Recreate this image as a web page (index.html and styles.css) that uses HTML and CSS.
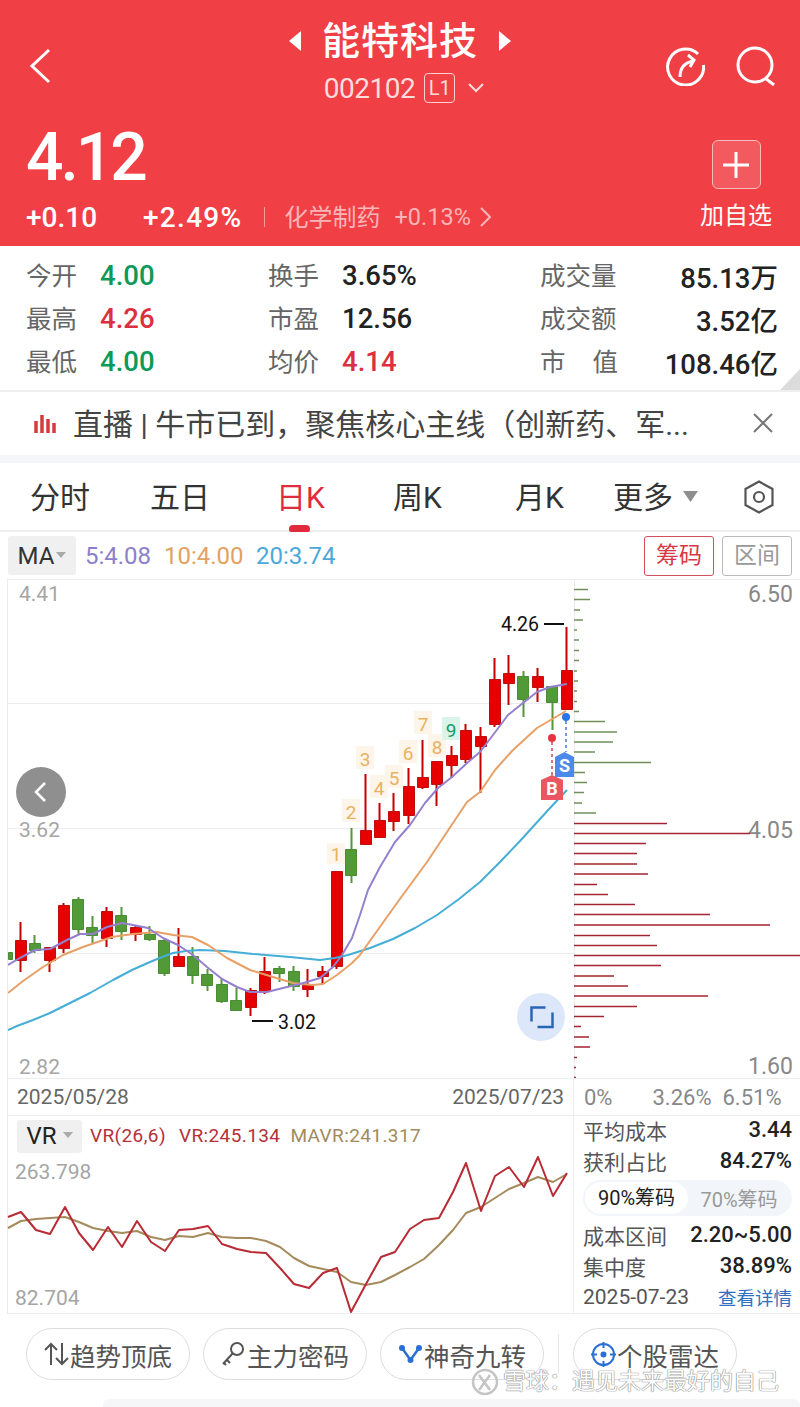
FILE: index.html
```
<!DOCTYPE html>
<html lang="zh">
<head>
<meta charset="utf-8">
<title>能特科技</title>
<link rel="stylesheet" href="styles.css">
</head>
<body>
<div class="page">
  <header class="hdr">
    <div class="hdr-top">
      <svg class="ic-back" viewBox="0 0 24 40" width="24" height="40"><polyline points="21,4 4,20 21,36"/></svg>
      <div class="hdr-mid">
        <div class="title-row">
          <svg class="tri" width="14" height="22" viewBox="0 0 14 22"><polygon points="13,1 13,21 1,11"/></svg>
          <span class="title">能特科技</span>
          <svg class="tri" width="14" height="22" viewBox="0 0 14 22"><polygon points="1,1 1,21 13,11"/></svg>
        </div>
        <div class="code-row">
          <span class="code">002102</span>
          <span class="l1">L1</span>
          <svg class="chev" width="16" height="10" viewBox="0 0 16 10"><polyline points="1,1 8,8 15,1"/></svg>
        </div>
      </div>
      <div class="hdr-icons">
        <svg class="ic-hdr" width="40" height="40" viewBox="0 0 40 40"><path d="M33 8A18 18 0 1 0 38.500 19"/><path d="M15 31C15 24 18 17 28 15"/><polyline points="23,9 29,14 25,21"/></svg>
        <svg class="ic-hdr" width="40" height="40" viewBox="0 0 40 40"><circle cx="19" cy="19" r="17"/><line x1="29" y1="32" x2="38" y2="39"/></svg>
      </div>
    </div>
    <div class="hdr-bot">
      <div class="quote">
        <div class="price">4.12</div>
        <div class="chg-row">
          <span class="chg c1">+0.10</span>
          <span class="chg c2">+2.49%</span>
          <span class="vsep"></span>
          <span class="sector">化学制药</span>
          <span class="sector-chg">+0.13%</span>
          <svg class="sector-arrow" width="11" height="20" viewBox="0 0 11 20"><polyline points="1,1 10,10 1,19"/></svg>
        </div>
      </div>
      <div class="add">
        <div class="add-box"><svg width="28" height="28" viewBox="0 0 28 28"><path d="M14 1V27M1 14H27"/></svg></div>
        <div class="add-txt">加自选</div>
      </div>
    </div>
  </header>

  <section class="stats">
    <div class="stat"><span class="k">今开</span><span class="v green">4.00</span></div>
    <div class="stat"><span class="k">换手</span><span class="v">3.65%</span></div>
    <div class="stat wide"><span class="k">成交量</span><span class="v">85.13万</span></div>
    <div class="stat"><span class="k">最高</span><span class="v red">4.26</span></div>
    <div class="stat"><span class="k">市盈</span><span class="v">12.56</span></div>
    <div class="stat wide"><span class="k">成交额</span><span class="v">3.52亿</span></div>
    <div class="stat"><span class="k">最低</span><span class="v green">4.00</span></div>
    <div class="stat"><span class="k">均价</span><span class="v red">4.14</span></div>
    <div class="stat wide"><span class="k kj"><span>市</span><span>值</span></span><span class="v">108.46亿</span></div>
    <span class="corner"></span>
  </section>

  <section class="news">
    <svg class="news-ic" width="24" height="20" viewBox="0 0 24 20"><path d="M3 7V19M9 1V19M15 5V19M21 9V19"/></svg>
    <span class="news-txt">直播 | 牛市已到，聚焦核心主线（创新药、军...</span>
    <svg class="news-x" width="20" height="20" viewBox="0 0 20 20"><path d="M1 1L19 19M19 1L1 19"/></svg>
  </section>

  <nav class="tabs">
    <span class="tab t1">分时</span>
    <span class="tab t2">五日</span>
    <span class="tab t3 on">日K</span>
    <span class="tab t4">周K</span>
    <span class="tab t5">月K</span>
    <span class="tab t6">更多<svg width="15" height="12" viewBox="0 0 15 12"><polygon points="0,1 15,1 7.500,12"/></svg></span>
    <svg class="hex" width="30" height="34" viewBox="0 0 30 34"><polygon points="15,1.500 28.500,9 28.500,25 15,32.500 1.500,25 1.500,9"/><circle cx="15" cy="17" r="5"/></svg>
  </nav>

  <section class="ma-row">
    <span class="pick">MA<i class="caret"></i></span>
    <span class="ma m5">5:4.08</span>
    <span class="ma m10">10:4.00</span>
    <span class="ma m20">20:3.74</span>
    <span class="btn b-on">筹码</span>
    <span class="btn">区间</span>
  </section>

  <section class="panel">
    <svg class="main" viewBox="8 580 792 498" width="792" height="498">
      <path class="grid" d="M8 703.500H574M8 828.500H574M8 953.500H574M574.500 580V1078"/>
      <g class="ax">
        <text class="al" x="19" y="601">4.41</text>
        <text class="al" x="19" y="837">3.62</text>
        <text class="al" x="19" y="1074">2.82</text>
        <text class="ar" x="748" y="602">6.50</text>
        <text class="ar" x="748" y="838">4.05</text>
        <text class="ar" x="748" y="1074">1.60</text>
      </g>
      <path class="chip-g" d="M574 589.500H588M574 599.500H590M574 610H580M574 620H583M574 630H577M574 640H579M574 650.500H579M574 660.500H579M574 671H577M574 681H578M574 691H577M574 701.500H577M574 711.500H579M574 721.500H605M574 732H617M574 742H613M574 752H595M574 762.500H651M574 772.500H585M574 782.500H587M574 792.500H584M574 803H582M574 813H596"/>
      <path class="chip-r" d="M574 823.500H667M574 833.500H750M574 843.500H646M574 853.500H637M574 864H637M574 874H648M574 884.500H597M574 894.500H608M574 904.500H635M574 914.500H710M574 925H770M574 935.500H650M574 945.500H657M574 955.500H800M574 965.500H661M574 976H614M574 986H628M574 996H708M574 1006.500H637M574 1016.500H604M574 1026.500H581M574 1037H589M574 1047H590M574 1057.500H577M574 1067.500H576M574 1077.500H576"/>

      <path class="wick-r" d="M20.500 922V972M49.500 947V972M63.500 903V953M106.500 907V947M135.500 925V941M178.500 928V967M250.500 988V1016M264.500 957V994M307.500 969V997M322.500 966V984M336.500 871V969M365.500 774V844M379.500 803V837M393.500 793V831M408.500 768V824M422.500 740V789M436.500 761V806M451.500 746V778M465.500 724V763M480.500 727V793M494.500 658V727M508.500 655V705M537.500 668V702M566.500 627V709"/>
      <path class="wick-g" d="M34.500 935V953M78.500 897V935M92.500 916V943M121.500 907V940M149.500 926V941M164.500 938V976M192.500 947V984M207.500 969V991M221.500 978V1003M236.500 988V1011M279.500 966V982M293.500 966V991M351.500 828V883M523.500 671V717M552.500 686V730"/>
      <path class="body-g" d="M8.500 952.500h4v7h-4zM29.500 943.500h11v7h-11zM72.500 899.500h11v30h-11zM86.500 927.500h11v8h-11zM115.500 915.500h11v16h-11zM144.500 934.500h11v5h-11zM158.500 940.500h11v33h-11zM187.500 956.500h11v19h-11zM201.500 974.500h11v11h-11zM216.500 984.500h11v17h-11zM230.500 1000.500h11v10h-11zM273.500 968.500h11v5h-11zM288.500 971.500h11v15h-11zM345.500 849.500h11v26h-11zM517.500 676.500h11v23h-11zM546.500 686.500h11v16h-11z"/>
      <path class="body-r" d="M15.500 940.500h11v20h-11zM44.500 947.500h11v13h-11zM58.500 905.500h11v43h-11zM101.500 911.500h11v27h-11zM130.500 927.500h11v7h-11zM173.500 956.500h11v10h-11zM245.500 990.500h11v17h-11zM259.500 971.500h11v20h-11zM302.500 985.500h11v4h-11zM317.500 971.500h11v5h-11zM331.500 871.500h11v95h-11zM360.500 830.500h11v14h-11zM374.500 820.500h11v17h-11zM388.500 811.500h11v10h-11zM403.500 786.500h11v29h-11zM417.500 777.500h11v10h-11zM431.500 761.500h11v23h-11zM446.500 755.500h11v10h-11zM460.500 730.500h11v29h-11zM475.500 736.500h11v10h-11zM489.500 679.500h11v45h-11zM503.500 673.500h11v10h-11zM532.500 676.500h11v11h-11zM561.500 670.500h11v39h-11z"/>

      <polyline class="ln l20" points="8,1030 17,1026 33,1020 50,1013 70,1003 90,993 113,980 132,970 150,962 162,957 173,953 186,951 200,950 225,951 253,954 290,957 320,960 335,958 348,955 370,948 393,939 415,928 437,915 459,899 480,882 500,862 520,841 530,830 550,808 567,790"/>
      <polyline class="ln l10" points="8,993 23,981 43,967 63,955 83,947 112,937 133,934 157,932 173,935 192,937 208,945 227,958 250,970 273,977 293,983 312,985 323,984 337,975 352,963 360,955 372,938 397,903 427,862 443,838 467,802 480,792 495,770 513,750 537,728 566,711"/>
      <polyline class="ln l5" points="8,965 20,958 35,950 50,949 67,940 80,934 93,934 107,927 122,923 133,925 148,928 163,938 178,945 193,955 207,967 222,979 237,987 250,992 267,992 287,987 300,984 320,978 333,967 342,955 352,938 360,915 368,890 380,867 395,842 410,825 425,803 438,788 452,777 467,763 480,752 493,735 508,715 523,703 537,692 550,687 567,684"/>

      <g class="tags">
        <rect class="tag" x="327" y="843" width="18" height="21"/><text class="tn" x="336" y="861">1</text>
        <rect class="tag" x="342" y="799" width="18" height="23"/><text class="tn" x="351" y="819">2</text>
        <rect class="tag" x="356" y="746" width="18" height="23"/><text class="tn" x="365" y="766">3</text>
        <rect class="tag" x="370" y="775" width="18" height="23"/><text class="tn" x="379" y="795">4</text>
        <rect class="tag" x="385" y="765" width="18" height="23"/><text class="tn" x="394" y="785">5</text>
        <rect class="tag" x="399" y="740" width="18" height="23"/><text class="tn" x="408" y="760">6</text>
        <rect class="tag" x="414" y="711" width="18" height="23"/><text class="tn" x="423" y="731">7</text>
        <rect class="tag" x="428" y="734" width="18" height="23"/><text class="tn" x="437" y="754">8</text>
        <rect class="tag9" x="442" y="717" width="18" height="23"/><text class="tn9" x="451" y="737">9</text>
      </g>

      <path class="hl" d="M544 624H564M252 1021H273"/>
      <text class="hlt" x="501" y="631">4.26</text>
      <text class="hlt" x="278" y="1029">3.02</text>

      <line class="dash-r" x1="552" y1="742" x2="552" y2="775"/>
      <line class="dash-b" x1="566" y1="721" x2="566" y2="752"/>
      <circle class="dot-r" cx="552" cy="738" r="4"/>
      <circle class="dot-b" cx="566" cy="717" r="4"/>
      <polygon class="bdg-b" points="552,775 563,780 563,800 541,800 541,780"/>
      <text class="bdg-t" x="552" y="795">B</text>
      <polygon class="bdg-s" points="564.500,752 574,757 574,777 555,777 555,757"/>
      <text class="bdg-t" x="564.500" y="772">S</text>

      <circle class="back" cx="41" cy="792" r="25"/>
      <polyline class="back-c" points="45,783 36,792 45,801"/>

      <circle class="expand" cx="541" cy="1017" r="24"/>
      <path class="expand-i" d="M531.500 1021.500V1007.500H545.500M552.500 1012.500V1027H537.500"/>
    </svg>

    <div class="axis">
      <div class="axis-l"><span>2025/05/28</span><span>2025/07/23</span></div>
      <div class="axis-r"><span>0%</span><span class="ar1">3.26%</span><span>6.51%</span></div>
    </div>

    <div class="sub">
      <div class="sub-l">
        <div class="vr-head">
          <span class="pick pick-vr">VR<i class="caret"></i></span>
          <span class="vr a">VR(26,6)</span>
          <span class="vr a">VR:245.134</span>
          <span class="vr b">MAVR:241.317</span>
        </div>
        <svg class="vr-chart" viewBox="8 1154 566 158" width="566" height="158">
          <text class="al" x="15" y="1179">263.798</text>
          <text class="al" x="15" y="1305">82.704</text>
          <polyline class="ln mavr" points="8,1228 21,1221 36,1219 50,1218 65,1217 79,1222 93,1228 108,1231 122,1233 137,1231 151,1237 165,1240 179,1236 193,1237 208,1233 222,1237 237,1238 251,1238 266,1241 280,1247 294,1258 309,1266 323,1269 337,1272 351,1282 366,1285 381,1282 395,1275 410,1267 424,1259 439,1245 453,1230 466,1213 481,1207 495,1198 509,1189 524,1183 538,1177 553,1182 567,1174"/>
          <polyline class="ln vrl" points="8,1217 21,1212 36,1230 50,1234 65,1207 79,1233 93,1250 108,1227 122,1247 137,1221 151,1242 165,1251 179,1230 193,1229 208,1226 222,1244 237,1249 251,1252 266,1253 280,1268 294,1284 309,1288 323,1273 337,1268 351,1312 366,1284 381,1257 395,1252 410,1229 424,1220 439,1218 453,1192 466,1163 481,1211 495,1176 509,1167 524,1187 538,1157 553,1196 567,1173"/>
        </svg>
      </div>
      <div class="sub-r">
        <div class="row"><span class="rk">平均成本</span><span class="rv">3.44</span></div>
        <div class="row"><span class="rk">获利占比</span><span class="rv">84.27%</span></div>
        <div class="seg"><span class="seg-on">90%筹码</span><span class="seg-off">70%筹码</span></div>
        <div class="row"><span class="rk">成本区间</span><span class="rv">2.20~5.00</span></div>
        <div class="row"><span class="rk">集中度</span><span class="rv">38.89%</span></div>
        <div class="row"><span class="rk">2025-07-23</span><span class="link">查看详情</span></div>
      </div>
    </div>
  </section>

  <footer class="tools">
    <span class="pill"><svg width="25" height="24" viewBox="0 0 25 24"><path d="M7 23V2M1 8L7 2L13 8M18 1V22M12 16L18 22L24 16"/></svg>趋势顶底</span>
    <span class="pill"><svg width="25" height="26" viewBox="0 0 25 26"><circle cx="16" cy="8" r="6"/><path d="M12 12L2 23M6 19L9 22M3 22L5 24"/></svg>主力密码</span>
    <span class="pill"><svg class="ic-v" width="25" height="20" viewBox="0 0 25 20"><path d="M4 4L12.500 16L21 4"/><circle cx="4" cy="4" r="3"/><circle cx="21" cy="4" r="3"/><circle cx="12.500" cy="16" r="3"/></svg>神奇九转</span>
    <span class="tool-sep"></span>
    <span class="pill"><svg class="ic-r" width="25" height="25" viewBox="0 0 25 25"><circle cx="12.500" cy="12.500" r="10.500"/><path d="M12.500 0V6M12.500 19V25M0 12.500H6M19 12.500H25"/><circle class="ic-rd" cx="12.500" cy="12.500" r="2"/></svg>个股雷达</span>
  </footer>
  <div class="home-bar"></div>

  <div class="wm">
    <svg width="30" height="30" viewBox="0 0 30 30"><circle cx="15" cy="15" r="12"/><path d="M9 8L20 23M20 8L9 23"/></svg>
    <span>雪球：遇见未来最好的自己</span>
  </div>
</div>
</body>
</html>
```

FILE: styles.css
```
* { box-sizing: border-box; }
html, body { margin: 0; padding: 0; background: #fff; }
body { font-family: Roboto, "Noto Sans CJK SC", sans-serif; }
.page { position: relative; width: 800px; height: 1407px; overflow: hidden; background: #fff; }

/* header */
.hdr { height: 246px; background: #f04046; color: #fff; position: relative; }
.hdr-top { height: 122px; position: relative; display: flex; justify-content: center; }
.ic-back { position: absolute; left: 28px; top: 46px; }
.ic-back polyline { fill: none; stroke: #fff; stroke-width: 3; }
.hdr-mid { display: flex; flex-direction: column; align-items: center; padding-top: 16px; }
.title-row { display: flex; align-items: center; gap: 20px; height: 50px; }
.tri polygon { fill: #fff; }
.title { font-size: 38px; font-weight: 500; letter-spacing: 1px; line-height: 50px; }
.code-row { display: flex; align-items: center; gap: 9px; margin-top: 6px; height: 32px; margin-left: 8px; }
.code { font-size: 28px; letter-spacing: -0.500px; color: #fbdcdc; }
.l1 { width: 31px; height: 30px; border: 1px solid #fbd0d0; border-radius: 4px; font-size: 20px; line-height: 28px; text-align: center; color: #fbdcdc; }
.chev { margin-left: 4px; }
.chev polyline { fill: none; stroke: #fbdcdc; stroke-width: 2; }
.hdr-icons { position: absolute; left: 665px; top: 46px; display: flex; gap: 31px; }
.ic-hdr * { fill: none; stroke: #fff; stroke-width: 3; }
.hdr-bot { display: flex; justify-content: space-between; padding: 0 26px; }
.price { font-size: 66px; font-weight: 500; line-height: 70px; letter-spacing: -3px; margin-top: 1px; }
.chg-row { display: flex; align-items: center; margin-top: 7px; height: 34px; }
.chg { font-size: 28px; font-weight: 500; }
.c1 { width: 117px; }
.c2 { letter-spacing: 1.300px; }
.vsep { width: 1px; height: 20px; background: #f59a9e; margin: 0 19px 0 22px; }
.sector { font-size: 24px; color: #f9b5b7; margin-right: 14px; margin-top: -3px; }
.sector-chg { font-size: 23.500px; color: #f9b5b7; margin-right: 9px; margin-top: -1px; }
.sector-arrow polyline { fill: none; stroke: #f9b5b7; stroke-width: 2; }
.add { width: 74px; display: flex; flex-direction: column; align-items: center; margin-right: 1px; margin-top: 18px; }
.add-box { width: 49px; height: 49px; border: 1px solid #f9bcbc; border-radius: 6px; background: #f25a5f; display: flex; align-items: center; justify-content: center; }
.add-box path { fill: none; stroke: #fff; stroke-width: 3; }
.add-txt { font-size: 24px; margin-top: 10px; line-height: 34px; white-space: nowrap; }

/* stats */
.stats { position: relative; height: 146px; display: grid; grid-template-columns: 242px 272px 1fr; grid-auto-rows: 43px; padding: 8px 22px 0 26px; border-bottom: 2px solid #efefef; }
.stat { display: flex; align-items: center; }
.stat .k { width: 74px; font-size: 25.500px; color: #666; white-space: nowrap; margin-top: -5px; }
.stat .v { font-size: 27.500px; font-weight: 500; color: #222; white-space: nowrap; }
.stat.wide { justify-content: space-between; }
.stat.wide .k { width: 78px; }
.stat .kj { display: flex; justify-content: space-between; }
.green { color: #0c9a5a !important; }
.red { color: #dc2f3f !important; }
.corner { position: absolute; right: 0; bottom: 0; width: 0; height: 0; border-left: 20px solid transparent; border-bottom: 21px solid #dcdcdc; }

/* news */
.news { height: 63px; display: flex; align-items: center; }
.news-ic { margin-left: 33px; margin-right: 16px; }
.news-ic path { fill: none; stroke: #d83a3e; stroke-width: 3.500; }
.news-txt { font-size: 30px; color: #444; white-space: nowrap; width: 676px; margin-top: -3px; }
.news-x path { fill: none; stroke: #777; stroke-width: 2; }
.news-x { margin-left: 4px; margin-top: -2px; }

/* tabs */
.tabs { border-top: 8px solid #f5f6fa; height: 77px; border-bottom: 2px solid #eee; position: relative; display: grid; grid-template-columns: 120px 126px 117px 122px 98px 1fr; padding-left: 30px; align-items: center; }
.tab { font-size: 30px; color: #333; white-space: nowrap; padding-bottom: 4px; display: flex; align-items: center; }
.tab svg { margin-left: 10px; margin-top: 3px; }
.tab svg polygon { fill: #8e8e8e; }
.t3 { color: #e02b3d; position: relative; }
.t3::after { content: ""; position: absolute; left: 13px; bottom: -11px; width: 21px; height: 7px; border-radius: 4px 4px 2px 2px; background: #e02b3d; }
.hex { position: absolute; left: 744px; top: 17px; }
.hex * { fill: none; stroke: #555; stroke-width: 2.200; }

/* ma row */
.ma-row { height: 47px; display: flex; align-items: center; padding: 0 8px; }
.pick { display: flex; align-items: center; justify-content: center; gap: 2px; width: 68px; height: 39px; background: #f0f0f0; border-radius: 3px; font-size: 24px; color: #333; }
.caret { width: 0; height: 0; border-left: 5px solid transparent; border-right: 5px solid transparent; border-top: 6px solid #aaa; margin-top: -2px; }
.ma { font-size: 24px; margin-left: 9px; }
.m5 { color: #8d7fc9; width: 70px; }
.m10 { color: #e2a262; width: 83px; margin-left: 9px; }
.m20 { color: #4aa9d9; }
.btn { width: 70px; height: 40px; border: 1px solid #bbb; border-radius: 3px; font-size: 23px; line-height: 38px; text-align: center; color: #999; margin-left: 8px; }
.b-on { color: #d63844; border-color: #d4505a; margin-left: auto; }

/* chart */
.panel { margin-left: 7px; border-left: 1px solid #ececec; border-top: 1px solid #ececec; }
.main { display: block; }
.grid { fill: none; stroke: #ececec; stroke-width: 1; }
.al { font-size: 21px; fill: #a5a5a5; }
.ar { font-size: 23px; fill: #888; }
.chip-g { stroke: #6f9059; stroke-width: 1.500; fill: none; }
.chip-r { stroke: #a3252f; stroke-width: 1.500; fill: none; }
.wick-r { stroke: #c40000; stroke-width: 2; fill: none; }
.wick-g { stroke: #56963a; stroke-width: 2; fill: none; }
.body-r { fill: #e60000; stroke: #bf0f0f; stroke-width: 1; }
.body-g { fill: #529a38; stroke: #4a8c33; stroke-width: 1; }
.ln { fill: none; stroke-width: 2; stroke-linejoin: round; }
.l5 { stroke: #9580cf; }
.l10 { stroke: #e8a066; }
.l20 { stroke: #46aed6; }
.tag { fill: #fdf5e9; }
.tag9 { fill: #dcf3ea; }
.tn { font-size: 19px; fill: #e8b25f; text-anchor: middle; }
.tn9 { font-size: 19px; fill: #169a6c; text-anchor: middle; }
.hl { stroke: #111; stroke-width: 2; fill: none; }
.hlt { font-size: 19.500px; fill: #111; }
.dash-r { stroke: #c9455a; stroke-width: 1.500; stroke-dasharray: 3 3; }
.dash-b { stroke: #4a78c8; stroke-width: 1.500; stroke-dasharray: 3 3; }
.dot-r { fill: #e83340; }
.dot-b { fill: #2a74e6; }
.bdg-b { fill: #ea5662; }
.bdg-s { fill: #4d89ea; }
.bdg-t { font-size: 18px; font-weight: 700; fill: #fff; text-anchor: middle; }
.back { fill: #8f8f8f; }
.back-c { fill: none; stroke: #fff; stroke-width: 2.500; }
.expand { fill: #dce7f9; }
.expand-i { fill: none; stroke: #2765b5; stroke-width: 2.500; }

.axis { height: 38px; display: grid; grid-template-columns: 566px 1fr; border-top: 1px solid #ececec; border-bottom: 1px solid #ececec; }
.axis-l { display: flex; justify-content: space-between; align-items: center; padding: 0 9px 0 9px; font-size: 21px; color: #666; border-right: 1px solid #ececec; }
.axis-r { display: flex; align-items: center; padding-left: 10px; font-size: 22px; color: #888; }
.ar1 { margin-left: 40px; margin-right: 11px; }

.sub { height: 198px; display: grid; grid-template-columns: 566px 1fr; border-bottom: 1px solid #ececec; }
.sub-l { border-right: 1px solid #ececec; }
.vr-head { display: flex; align-items: center; height: 38px; padding-left: 9px; }
.pick-vr { width: 65px; height: 33px; font-size: 24px; color: #222; margin-top: 2px; gap: 6px; }
.vr { font-size: 19px; margin-left: 8px; white-space: nowrap; letter-spacing: .4px; }
.vr.a { color: #b4313b; margin-right: 5px; }
.vr.b { color: #a18a5d; margin-left: 5px; }
.vr-chart { display: block; overflow: visible; }
.mavr { stroke: #a58a5c; }
.vrl { stroke: #b82a34; }
.sub-r { padding: 0 8px 0 9px; display: flex; flex-direction: column; margin-top: -2px; }
.row { display: flex; justify-content: space-between; align-items: center; height: 31px; font-size: 21px; color: #333; white-space: nowrap; }
.rk { color: #555; }
.rv { color: #222; font-weight: 500; font-size: 22px; }
.link { font-size: 18.500px; color: #2f6fc0; }
.seg { display: flex; align-items: center; height: 36px; margin: 4px 0 3px; border-radius: 18px; background: #f2f5fa; padding: 2px; }
.seg-on { width: 103px; height: 32px; line-height: 32px; background: #fff; border-radius: 16px; text-align: center; font-size: 20px; color: #222; }
.seg-off { flex: 1; text-align: center; font-size: 20px; color: #999; }

/* bottom */
.tools { display: flex; align-items: center; padding: 14px 0 0 26px; }
.pill { width: 164px; height: 52px; border: 1px solid #ddd; border-radius: 26px; display: flex; align-items: center; justify-content: center; font-size: 25.500px; color: #555; margin-right: 13px; gap: 1px; white-space: nowrap; }
.pill svg * { fill: none; stroke: #555; stroke-width: 2; }
.ic-v path { stroke: #2a6fd4 !important; stroke-width: 2.500 !important; }
.ic-v circle { fill: #2a6fd4 !important; stroke: none !important; }
.ic-r * { stroke: #2a6fd4 !important; }
.ic-rd { fill: #2a6fd4 !important; }
.tool-sep { width: 1px; height: 40px; background: #e8e8e8; margin: 0 14px 0 1px; }
.home-bar { position: absolute; left: 103px; right: 0; bottom: 0; height: 8px; background: #f6f6f8; border-radius: 6px 6px 0 0; }
.wm { position: absolute; left: 470px; top: 1367px; display: flex; align-items: center; gap: 3px; font-size: 23px; line-height: 30px; color: #fff; text-shadow: 0 0 1px #888, 0 0 1px #888, 0 0 1px #888; white-space: nowrap; }
.wm svg * { fill: none; stroke: #c4c4c4; stroke-width: 2.500; }
```
